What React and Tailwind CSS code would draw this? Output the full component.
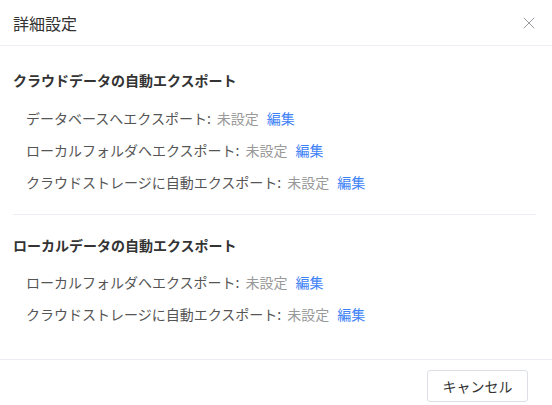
import { X } from 'lucide-react';

const font = { fontFamily: '"Noto Sans CJK JP", "Noto Sans", sans-serif' };

const sections = [
  {
    title: 'クラウドデータの自動エクスポート',
    rows: [
      'データベースへエクスポート',
      'ローカルフォルダへエクスポート',
      'クラウドストレージに自動エクスポート',
    ],
  },
  {
    title: 'ローカルデータの自動エクスポート',
    rows: ['ローカルフォルダへエクスポート', 'クラウドストレージに自動エクスポート'],
  },
];

function Row({ label }) {
  return (
    <div className="flex items-center h-[32px] pl-[13px] text-[14px]">
      <span className="text-[#555555]">{label}:</span>
      <span className="ml-[6px] text-[#999999]">未設定</span>
      <button className="ml-[8px] text-[#3e82f7]">編集</button>
    </div>
  );
}

export default function App() {
  return (
    <div className="w-[552px] h-[405px] bg-white flex flex-col" style={font}>
      {/* Header */}
      <div className="h-[46px] flex items-center justify-between pl-[13px] pr-[13px] border-b border-[#ebeef5]">
        <span className="text-[16px] text-[#333333]">詳細設定</span>
        <X className="w-[20px] h-[20px] text-[#909399]" strokeWidth={1.1} />
      </div>

      {/* Body */}
      <div className="flex-1 px-[13px] pt-[24px]">
        {sections.map((section, i) => (
          <div key={section.title} className={i > 0 ? 'mt-[16px] pt-[20px] border-t border-[#ebeef5] mr-[3px]' : ''}>
            <div className="text-[14px] leading-[20px] font-bold text-[#333333]">{section.title}</div>
            <div className={i > 0 ? 'mt-[11px]' : 'mt-[12px]'}>
              {section.rows.map((r) => (
                <Row key={r} label={r} />
              ))}
            </div>
          </div>
        ))}
      </div>

      {/* Footer */}
      <div className="h-[46px] flex justify-end items-start pt-[10px] pr-[24px] border-t border-[#ebeef5]">
        <button className="h-[32px] w-[101px] border border-[#dcdfe6] rounded-[3px] text-[14px] text-[#333333] bg-white">
          キャンセル
        </button>
      </div>
    </div>
  );
}
